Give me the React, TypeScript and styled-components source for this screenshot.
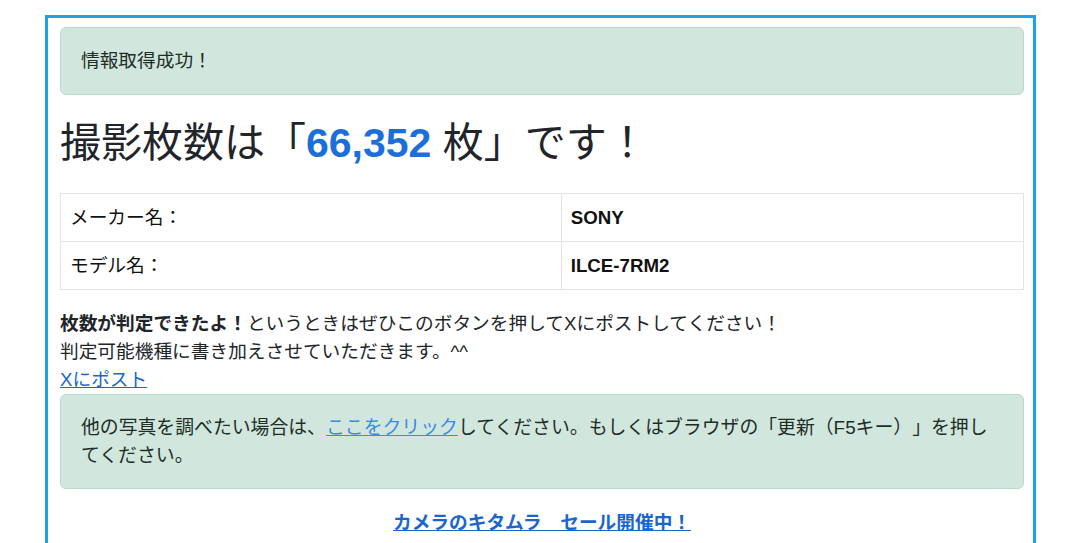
import React from 'react';
import styled, { createGlobalStyle } from 'styled-components';

const GlobalStyle = createGlobalStyle`
  body {
    margin: 0;
    background: #ffffff;
    color: #212529;
    font-family: "Liberation Sans", "Noto Sans CJK JP", sans-serif;
    font-size: 18.7px;
    line-height: 28px;
    text-spacing-trim: space-all;
  }
`;

const Frame = styled.div`
  box-sizing: border-box;
  width: 991px;
  margin: 15px 0 0 45px;
  padding: 9px 9px 0 12px;
  border: 3px solid #1ea1e6;
  border-bottom: none;
  min-height: 540px;
`;

const Alert = styled.div<{ $tight?: boolean }>`
  background: #d1e7dd;
  border: 1px solid #badbcc;
  border-radius: 6px;
  color: #1f2d27;
  font-size: ${({ $tight }) => ($tight ? '18.85px' : '18.7px')};
  padding: ${({ $tight }) => ($tight ? '18.5px 24px 18.5px 20px' : '19px 20px')};
`;

const Heading = styled.h1`
  margin: 24px 0 25px;
  font-size: 41px;
  font-weight: 400;
  line-height: 49px;
  color: #212529;
`;

const Count = styled.span`
  color: #1c6fd8;
  font-weight: 700;
`;

const InfoTable = styled.table`
  width: 100%;
  border-collapse: collapse;
  border: 1px solid #e1e4e7;
`;

const Cell = styled.td<{ $value?: boolean }>`
  border: 1px solid #e1e4e7;
  padding: 9.5px 9px;
  width: ${({ $value }) => ($value ? 'auto' : '52%')};
  font-weight: ${({ $value }) => ($value ? 700 : 400)};
  color: #111;
`;

const Note = styled.p`
  margin: 20px 0 0;
`;

const Link = styled.a<{ $light?: boolean }>`
  color: ${({ $light }) => ($light ? '#3b8be2' : '#1a66cf')};
  text-decoration: underline;
`;

const Footer = styled.div`
  margin-top: 20px;
  text-align: center;
  font-weight: 700;
`;

const App: React.FC = () => {
  return (
    <>
      <GlobalStyle />
      <Frame>
        <Alert>情報取得成功！</Alert>
        <Heading>
          撮影枚数は「<Count>66,352</Count> 枚」です！
        </Heading>
        <InfoTable>
          <tbody>
            <tr>
              <Cell>メーカー名：</Cell>
              <Cell $value>SONY</Cell>
            </tr>
            <tr>
              <Cell>モデル名：</Cell>
              <Cell $value>ILCE-7RM2</Cell>
            </tr>
          </tbody>
        </InfoTable>
        <Note>
          <b>枚数が判定できたよ！</b>というときはぜひこのボタンを押してXにポストしてください！
          <br />
          判定可能機種に書き加えさせていただきます。^^
        </Note>
        <div>
          <Link href="#">Xにポスト</Link>
        </div>
        <Alert $tight>
          他の写真を調べたい場合は、<Link $light href="#">ここをクリック</Link>してください。もしくはブラウザの「更新（F5キー）」を押してください。
        </Alert>
        <Footer>
          <Link href="#">カメラのキタムラ　セール開催中！</Link>
        </Footer>
      </Frame>
    </>
  );
};

export default App;
